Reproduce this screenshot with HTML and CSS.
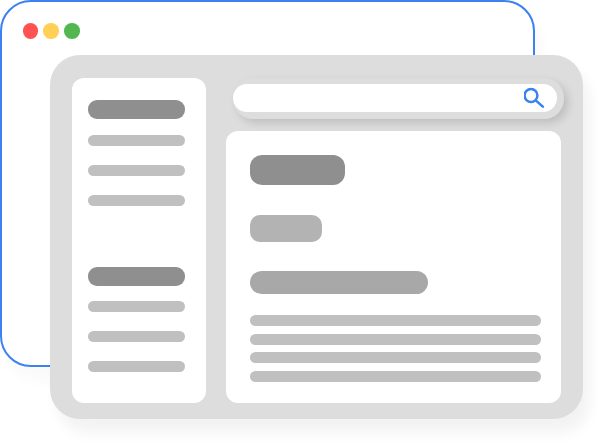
FILE: index.html
```html
<!DOCTYPE html>
<html lang="en">
<head>
<meta charset="utf-8">
<title>Browser window illustration</title>
<link rel="stylesheet" href="styles.css">
</head>
<body>
<div class="stage">
  <div class="back-window">
    <div class="dots">
      <span class="dot dot-red"></span>
      <span class="dot dot-yellow"></span>
      <span class="dot dot-green"></span>
    </div>
  </div>
  <div class="front-window">
    <aside class="sidebar">
      <div class="nav-group">
        <div class="nav-head"></div>
        <div class="nav-line"></div>
        <div class="nav-line"></div>
        <div class="nav-line"></div>
      </div>
      <div class="nav-group">
        <div class="nav-head nav-head-tight"></div>
        <div class="nav-line"></div>
        <div class="nav-line"></div>
        <div class="nav-line"></div>
      </div>
    </aside>
    <div class="content">
      <div class="search-wrap">
        <div class="search">
          <svg class="search-icon" viewBox="0 0 22 22" width="22" height="22" aria-hidden="true">
            <circle cx="7" cy="8.5" r="6.4" fill="none" stroke="#3b82f0" stroke-width="2.5"/>
            <path d="M12 13.6 L18.8 19.6" fill="none" stroke="#3b82f0" stroke-width="2.6" stroke-linecap="round"/>
          </svg>
        </div>
      </div>
      <main class="panel">
        <div class="block block-a"></div>
        <div class="block block-b"></div>
        <div class="block block-c"></div>
        <div class="lines">
          <div class="text-line"></div>
          <div class="text-line"></div>
          <div class="text-line"></div>
          <div class="text-line"></div>
        </div>
      </main>
    </div>
  </div>
</div>
</body>
</html>
```
FILE: styles.css
```css
html, body {
  margin: 0;
  padding: 0;
  background: #ffffff;
  overflow: hidden;
}

.stage {
  position: relative;
  width: 598px;
  height: 446px;
  overflow: hidden;
}

.back-window {
  position: absolute;
  left: 0;
  top: 0;
  width: 535px;
  height: 367px;
  box-sizing: border-box;
  border: 2px solid #3b82f0;
  border-radius: 31px;
  background: #ffffff;
  box-shadow: 7px 14px 14px rgba(0, 0, 0, 0.025);
  padding: 21.3px 20.8px;
}

.dots {
  display: flex;
  gap: 5.2px;
}

.dot {
  width: 15.5px;
  height: 15.5px;
  border-radius: 50%;
}

.dot-red { background: #ff5252; }
.dot-yellow { background: #ffcf56; }
.dot-green { background: #52b74f; }

.front-window {
  position: absolute;
  left: 50px;
  top: 55px;
  width: 533px;
  height: 364px;
  box-sizing: border-box;
  border-radius: 30px;
  background: #dddddd;
  box-shadow: 7px 14px 14px rgba(0, 0, 0, 0.05);
  padding: 23px 22px 16px;
  display: flex;
  gap: 20px;
}

.sidebar {
  width: 134px;
  box-sizing: border-box;
  background: #ffffff;
  border-radius: 12px;
  padding: 22px 21px 0 16px;
  display: flex;
  flex-direction: column;
  gap: 61px;
}

.nav-group {
  display: flex;
  flex-direction: column;
  gap: 19px;
}

.nav-head {
  height: 19px;
  border-radius: 9px;
  background: #8f8f8f;
  margin-bottom: -3px;
}

.nav-head-tight {
  margin-bottom: -4px;
}

.nav-line {
  height: 11px;
  border-radius: 6px;
  background: #c0c0c0;
}

.content {
  flex: 1;
  display: flex;
  flex-direction: column;
  gap: 12px;
}

.search-wrap {
  margin-left: 7px;
  margin-right: -3px;
  padding: 6px 7px 7px 0;
  border-radius: 20px;
  background: #dddddd;
  box-shadow: 4px 4px 9px rgba(0, 0, 0, 0.14);
}

.search {
  height: 28px;
  padding-right: 11px;
  border-radius: 14px;
  background: #ffffff;
  display: flex;
  align-items: center;
  justify-content: flex-end;
}

.search-icon {
  display: block;
}

.panel {
  flex: 1;
  background: #ffffff;
  border-radius: 12px;
  padding: 24px 20px 0 24px;
  display: flex;
  flex-direction: column;
  align-items: flex-start;
}

.block-a {
  width: 95px;
  height: 30px;
  border-radius: 12px;
  background: #8f8f8f;
  margin-bottom: 30px;
}

.block-b {
  width: 72px;
  height: 27px;
  border-radius: 10px;
  background: #b3b3b3;
  margin-bottom: 29px;
}

.block-c {
  width: 178px;
  height: 23px;
  border-radius: 12px;
  background: #a8a8a8;
  margin-bottom: 21px;
}

.lines {
  align-self: stretch;
  display: flex;
  flex-direction: column;
  gap: 7.67px;
}

.text-line {
  height: 11px;
  border-radius: 6px;
  background: #c0c0c0;
}
```
